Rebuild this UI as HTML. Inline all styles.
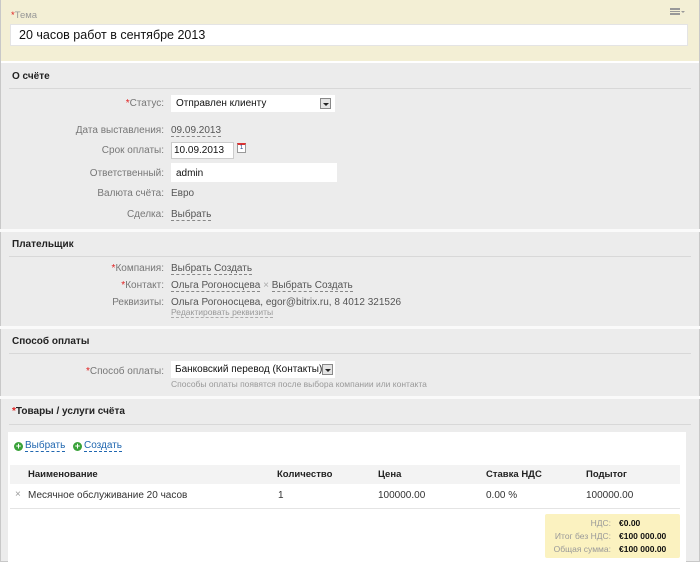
<!DOCTYPE html>
<html><head><meta charset="utf-8"><style>
*{margin:0;padding:0;box-sizing:border-box}
body{width:700px;height:562px;overflow:hidden;font-family:"Liberation Sans",sans-serif;font-size:10px;color:#333;background:#ececec;position:relative}
.a{position:absolute;white-space:nowrap}
.lb{color:#777;text-align:right;width:155px;left:9px}
.r{color:#e02020}
.h{font-weight:bold;font-size:10px;color:#222;left:12px}
.hr{position:absolute;left:9px;right:9px;height:1px;background:#d8d8d8}
.sep{position:absolute;left:0;right:0;height:3px;background:#fafafa}
.d{border-bottom:1px dashed #888;color:#555}
.inp{position:absolute;background:#fff;border:1px solid #ddd;padding:3px 5px;font-size:10px;color:#111;white-space:nowrap;overflow:hidden}
.sel{position:absolute;width:11px;height:11px;border:1px solid #888;background:#e4e4e4;top:3px;right:4px}
.sel:after{content:"";position:absolute;left:2px;top:4px;border:3px solid transparent;border-top:3px solid #222;border-bottom:0}
.bl{color:#2067b0;border-bottom:1px dashed #2067b0}
.pl{display:inline-block;width:9px;height:9px;border-radius:50%;background:#3aa23a;color:#fff;font-size:9px;line-height:9px;text-align:center;font-weight:bold;vertical-align:-1px;margin-right:2px}
.th{font-weight:bold;color:#222;font-size:9.5px}
</style></head><body>
<div class="a" style="left:0;top:0;width:700px;height:562px;border:1px solid #c8c8c8;border-top:0"></div>
<div class="a" style="left:1px;top:0;width:698px;height:61px;background:#f3efd5"></div>
<div class="a" style="left:1px;top:61px;width:698px;height:2px;background:#fff"></div>
<div class="a" style="left:11px;top:10px;color:#999;font-size:9.5px"><span class="r">*</span>Тема</div>
<div class="a" style="left:670px;top:8px;width:10px;height:7px;border-top:2px solid #999;border-bottom:2px solid #999"></div>
<div class="a" style="left:670px;top:11px;width:10px;height:1px;background:#999"></div>
<div class="a" style="left:681px;top:11px;border:2px solid transparent;border-top:2px solid #999"></div>
<div class="inp" style="left:10px;top:24px;width:678px;height:22px;font-size:12.5px;padding:3px 8px;border:1px solid #e4e4e4">20 часов работ в сентябре 2013</div>

<div class="a h" style="top:71px">О счёте</div>
<div class="hr" style="top:88px"></div>
<div class="a lb" style="top:98px"><span class="r">*</span>Статус:</div>
<div class="inp" style="left:171px;top:95px;width:164px;height:17px;border:0">Отправлен клиенту<div class="sel"></div></div>
<div class="a lb" style="top:125px">Дата выставления:</div>
<div class="a" style="left:171px;top:125px"><span class="d">09.09.2013</span></div>
<div class="a lb" style="top:145px">Срок оплаты:</div>
<div class="inp" style="left:171px;top:142px;width:63px;height:17px;padding:2px 2px;border:1px solid #ccc">10.09.2013</div>
<div class="a" style="left:237px;top:143px;width:9px;height:10px;border:1px solid #999;border-top:2px solid #d33;background:#fff;font-size:6px;text-align:center;line-height:7px;color:#248">1</div>
<div class="a lb" style="top:168px">Ответственный:</div>
<div class="inp" style="left:171px;top:163px;width:166px;height:19px;border:0;padding-top:5px">admin</div>
<div class="a lb" style="top:188px">Валюта счёта:</div>
<div class="a" style="left:171px;top:188px;color:#555">Евро</div>
<div class="a lb" style="top:209px">Сделка:</div>
<div class="a" style="left:171px;top:209px"><span class="d">Выбрать</span></div>
<div class="sep" style="top:229px"></div>

<div class="a h" style="top:239px">Плательщик</div>
<div class="hr" style="top:256px"></div>
<div class="a lb" style="top:263px"><span class="r">*</span>Компания:</div>
<div class="a" style="left:171px;top:263px"><span class="d">Выбрать</span> <span class="d">Создать</span></div>
<div class="a lb" style="top:280px"><span class="r">*</span>Контакт:</div>
<div class="a" style="left:171px;top:280px"><span class="d">Ольга Рогоносцева</span> <span style="color:#aaa">×</span> <span class="d">Выбрать</span> <span class="d">Создать</span></div>
<div class="a lb" style="top:297px">Реквизиты:</div>
<div class="a" style="left:171px;top:297px;color:#555">Ольга Рогоносцева, egor@bitrix.ru, 8 4012 321526</div>
<div class="a" style="left:171px;top:307px;font-size:8.5px;color:#999"><span style="border-bottom:1px dashed #aaa">Редактировать реквизиты</span></div>
<div class="sep" style="top:326px"></div>

<div class="a h" style="top:336px">Способ оплаты</div>
<div class="hr" style="top:353px"></div>
<div class="a lb" style="top:366px"><span class="r">*</span>Способ оплаты:</div>
<div class="inp" style="left:171px;top:361px;width:164px;height:17px;border:0;padding-left:4px">Банковский перевод (Контакты)<div class="sel" style="right:2px"></div></div>
<div class="a" style="left:171px;top:379px;font-size:8.5px;color:#999">Способы оплаты появятся после выбора компании или контакта</div>
<div class="sep" style="top:396px"></div>

<div class="a h" style="top:406px"><span class="r">*</span>Товары / услуги счёта</div>
<div class="hr" style="top:424px"></div>
<div class="a" style="left:8px;top:432px;width:678px;height:130px;background:#fff"></div>
<div class="a" style="left:14px;top:440px"><span class="pl">+</span><span class="bl">Выбрать</span></div>
<div class="a" style="left:73px;top:440px"><span class="pl">+</span><span class="bl">Создать</span></div>
<div class="a" style="left:10px;top:465px;width:670px;height:19px;background:#f3f3f3"></div>
<div class="a th" style="top:469px;left:28px">Наименование</div>
<div class="a th" style="top:469px;left:277px">Количество</div>
<div class="a th" style="top:469px;left:378px">Цена</div>
<div class="a th" style="top:469px;left:486px">Ставка НДС</div>
<div class="a th" style="top:469px;left:586px">Подытог</div>
<div class="a" style="top:489px;left:15px;color:#999">×</div>
<div class="a" style="top:490px;left:28px">Месячное обслуживание 20 часов</div>
<div class="a" style="top:490px;left:278px">1</div>
<div class="a" style="top:490px;left:378px">100000.00</div>
<div class="a" style="top:490px;left:486px">0.00 %</div>
<div class="a" style="top:490px;left:586px">100000.00</div>
<div class="a" style="left:10px;top:508px;width:670px;height:1px;background:#e4e4e4"></div>
<div class="a" style="left:545px;top:514px;width:135px;height:44px;background:#fbf2c0;border-radius:2px"></div>
<div class="a" style="left:545px;top:517px;width:66px;text-align:right;color:#999;font-size:8.5px;line-height:13px">НДС:<br>Итог без НДС:<br>Общая сумма:</div>
<div class="a" style="left:619px;top:517px;font-weight:bold;font-size:8.5px;line-height:13px;color:#111">€0.00<br>€100 000.00<br>€100 000.00</div>
</body></html>
